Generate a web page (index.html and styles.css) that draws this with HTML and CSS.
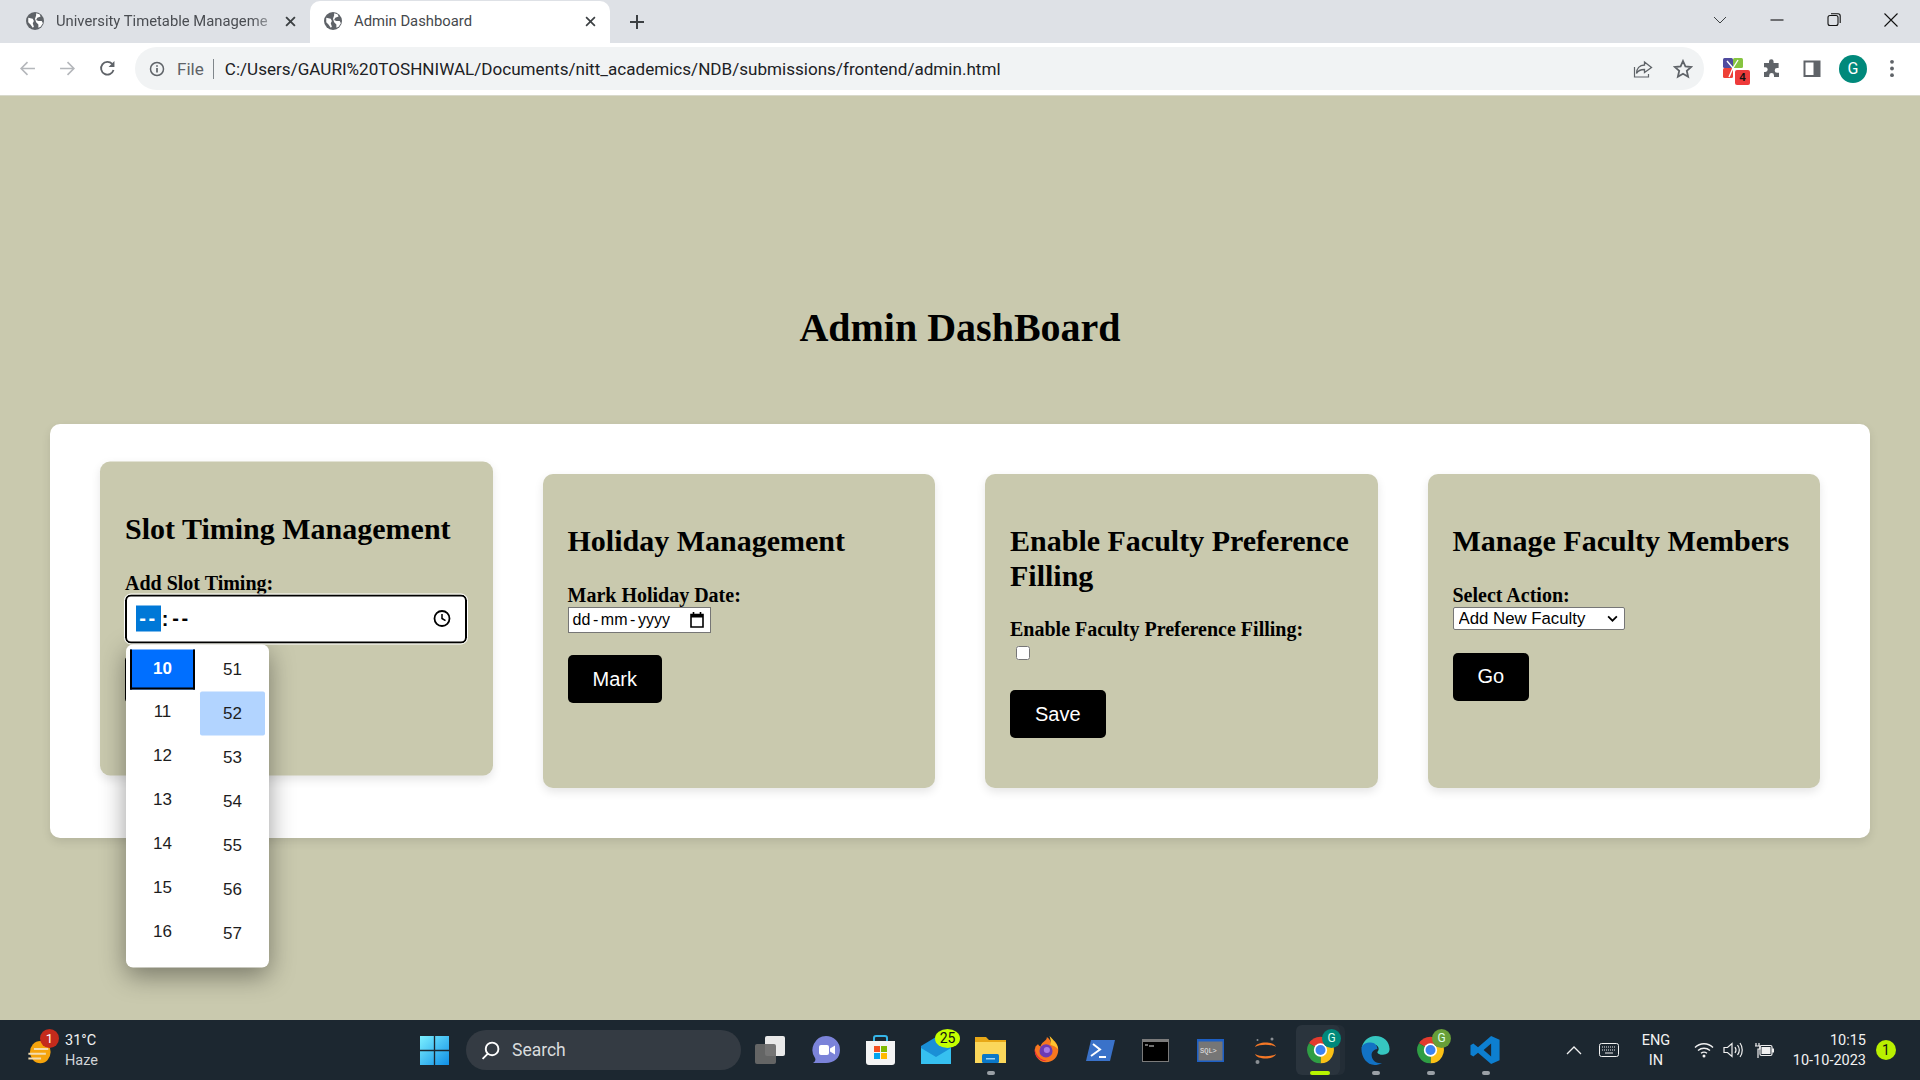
FILE: index.html
```html
<!DOCTYPE html>
<html lang="en">
<head>
<meta charset="utf-8">
<title>Admin Dashboard</title>
<link rel="stylesheet" href="styles.css">
</head>
<body>
<header class="chrome">
  <div class="tabstrip">
    <div class="tab tab-back">
      <svg class="globe" viewBox="0 0 16 16"><circle cx="8" cy="8" r="8" fill="#5f6368"/><path d="M2 5l4 1 1 2-1 2 1 3-1 1-2-3-2-2zM9 1l3 1 1 2-3 1-1 2 2 1 3 0 1 2-2 3-2 1 0-3-2-2-1-3 1-3z" fill="#fff"/></svg>
      <span class="tab-title fade">University Timetable Manageme</span>
      <svg class="tab-x" viewBox="0 0 10 10"><path d="M1 1l8 8M9 1l-8 8" stroke="#3c4043" stroke-width="1.7"/></svg>
    </div>
    <div class="tab tab-active">
      <svg class="globe" viewBox="0 0 16 16"><circle cx="8" cy="8" r="8" fill="#5f6368"/><path d="M2 5l4 1 1 2-1 2 1 3-1 1-2-3-2-2zM9 1l3 1 1 2-3 1-1 2 2 1 3 0 1 2-2 3-2 1 0-3-2-2-1-3 1-3z" fill="#fff"/></svg>
      <span class="tab-title">Admin Dashboard</span>
      <svg class="tab-x" viewBox="0 0 10 10"><path d="M1 1l8 8M9 1l-8 8" stroke="#3c4043" stroke-width="1.5"/></svg>
    </div>
    <svg class="newtab" viewBox="0 0 16 16"><path d="M8 1v14M1 8h14" stroke="#3c4043" stroke-width="2"/></svg>
    <div class="winctl">
      <svg class="w-ico" viewBox="0 0 16 16"><path d="M2 5l6 6 6-6" fill="none" stroke="#3c4043" stroke-width="1"/></svg>
      <svg class="w-ico" viewBox="0 0 16 16"><path d="M1.5 8h13" stroke="#111" stroke-width="1.1"/></svg>
      <svg class="w-ico" viewBox="0 0 16 16"><rect x="2" y="3.5" width="10" height="10" rx="2" fill="none" stroke="#111" stroke-width="1.1"/><path d="M5 1.8h7a2.2 2.2 0 0 1 2.2 2.2v7" fill="none" stroke="#111" stroke-width="1.1"/></svg>
      <svg class="w-ico" viewBox="0 0 16 16"><path d="M1.5 1.5l13 13M14.500 1.500l-13 13" stroke="#111" stroke-width="1.1"/></svg>
    </div>
  </div>
  <div class="toolbar">
    <svg class="nav-ico" viewBox="0 0 16 16"><path d="M15 8H2M8 2L2 8l6 6" fill="none" stroke="#b4b7bb" stroke-width="1.5"/></svg>
    <svg class="nav-ico" viewBox="0 0 16 16"><path d="M1 8h13M8 2l6 6-6 6" fill="none" stroke="#b4b7bb" stroke-width="1.5"/></svg>
    <svg class="nav-ico" viewBox="0 0 16 16"><path d="M13.700 9.500A6 6 0 1 1 12.400 3.700" fill="none" stroke="#5f6368" stroke-width="1.7"/><path d="M14.500 1v5.500H9z" fill="#5f6368"/></svg>
    <div class="omnibox">
      <svg class="info" viewBox="0 0 16 16"><circle cx="8" cy="8" r="6.500" fill="none" stroke="#5f6368" stroke-width="1.500"/><path d="M8 7v4.500M8 4.300v1.500" stroke="#5f6368" stroke-width="1.700"/></svg>
      <span class="scheme">File</span>
      <span class="omni-sep"></span>
      <span class="url">C:/Users/GAURI%20TOSHNIWAL/Documents/nitt_academics/NDB/submissions/frontend/admin.html</span>
      <svg class="omni-ico share" viewBox="0 0 20 20"><path d="M1.500 8v10h14v-3" fill="none" stroke="#5f6368" stroke-width="1.200"/><path d="M11.500 3l7 5.500-7 5v-3c-4 0-6.500 1-8 4 0-5 3-8.500 8-8.500z" fill="none" stroke="#5f6368" stroke-width="1.300"/></svg>
      <svg class="omni-ico" viewBox="0 0 20 20"><path d="M10 2l2.400 5.400 5.800.6-4.400 3.900 1.300 5.800L10 14.700l-5.100 3 1.300-5.800L1.800 8l5.800-.6z" fill="none" stroke="#5f6368" stroke-width="1.800"/></svg>
    </div>
    <div class="ext">
      <svg class="ext-logo" viewBox="0 0 20 20"><rect width="10" height="10" rx="1.500" fill="#4f4a9e"/><rect x="10" width="10" height="10" rx="1.500" fill="#86c440"/><rect y="10" width="10" height="10" rx="1.500" fill="#ee4036"/><path d="M10 10l-4 9M10 10L4 3M10 10l5-8" stroke="#fff" stroke-width="1.400"/></svg>
      <span class="ext-badge">4</span>
    </div>
    <svg class="bar-ico" viewBox="0 0 20 20"><path d="M7 2.500a2.300 2.300 0 0 1 4.600 0V4h5v5h-1.500a2.400 2.400 0 0 0 0 4.800H17V18H12v-1.500a2.400 2.400 0 0 0-4.800 0V18H2v-5h1.300a2.400 2.400 0 0 0 0-4.800H2V4h5z" fill="#5f6368"/></svg>
    <svg class="bar-ico" viewBox="0 0 20 20"><rect x="1.500" y="1.500" width="17" height="16.500" fill="#5f6368"/><rect x="3.500" y="3.500" width="8" height="12.500" fill="#fff"/></svg>
    <span class="avatar">G</span>
    <svg class="menu-ico" viewBox="0 0 6 20"><circle cx="3" cy="3" r="2" fill="#5f6368"/><circle cx="3" cy="10" r="2" fill="#5f6368"/><circle cx="3" cy="17" r="2" fill="#5f6368"/></svg>
  </div>
</header>

<main class="page">
  <h1 class="title">Admin DashBoard</h1>
  <section class="panel">
    <article class="card card-hover">
      <h2>Slot Timing Management</h2>
      <label class="lbl">Add Slot Timing:</label>
      <div class="time-input">
        <span class="seg seg-on">--</span><span class="colon">:</span><span class="seg">--</span>
        <svg class="clock" viewBox="0 0 18 18"><circle cx="9" cy="9" r="7.500" fill="none" stroke="#000" stroke-width="1.800"/><path d="M9 4.500V9l3.500 2.200" fill="none" stroke="#000" stroke-width="1.500"/></svg>
      </div>
      <button class="btn btn-add" type="button" aria-label="Add"></button>
      <div class="picker">
        <ul class="col col-h">
          <li class="now">10</li><li>11</li><li>12</li><li>13</li><li>14</li><li>15</li><li>16</li>
        </ul>
        <ul class="col col-m">
          <li>51</li><li class="hov">52</li><li>53</li><li>54</li><li>55</li><li>56</li><li>57</li>
        </ul>
      </div>
    </article>
    <article class="card">
      <h2>Holiday Management</h2>
      <label class="lbl">Mark Holiday Date:</label>
      <div class="date-input">
        <span class="date-text">dd</span><span class="date-dash">-</span><span class="date-text">mm</span><span class="date-dash">-</span><span class="date-text">yyyy</span>
        <svg class="cal" viewBox="0 0 14 16"><path d="M1 2.500h12v12.500H1z" fill="none" stroke="#000" stroke-width="1.600"/><path d="M1 2.500h12v3H1z" fill="#000"/><path d="M3.500 0v3M10.500 0v3" stroke="#000" stroke-width="1.600"/></svg>
      </div>
      <button class="btn btn-mark" type="button">Mark</button>
    </article>
    <article class="card">
      <h2>Enable Faculty Preference Filling</h2>
      <label class="lbl">Enable Faculty Preference Filling:</label>
      <input class="check" type="checkbox">
      <button class="btn btn-save" type="button">Save</button>
    </article>
    <article class="card">
      <h2>Manage Faculty Members</h2>
      <label class="lbl">Select Action:</label>
      <select class="sel"><option>Add New Faculty</option></select>
      <button class="btn btn-go" type="button">Go</button>
    </article>
  </section>
</main>

<footer class="taskbar">
  <div class="weather">
    <div class="wx-ico">
      <svg viewBox="0 0 30 34"><ellipse cx="16" cy="19" rx="13" ry="14" fill="#f6a40c"/><path d="M1 21h22M1 27h16M8 15h18" stroke="#f3dcae" stroke-width="2.500"/></svg>
      <span class="wx-badge">1</span>
    </div>
    <div class="wx-text"><span>31°C</span><span class="haze">Haze</span></div>
  </div>
  <div class="center">
    <svg class="winlogo" viewBox="0 0 30 30"><defs><linearGradient id="wl" x1="0" y1="0" x2="1" y2="1"><stop offset="0" stop-color="#7cf0ff"/><stop offset="1" stop-color="#0f8fe6"/></linearGradient></defs><path d="M0 0h14.300v14.300H0zM15.700 0H30v14.300H15.700zM0 15.700h14.300V30H0zM15.700 15.700H30V30H15.700z" fill="url(#wl)"/></svg>
    <div class="search">
      <svg class="search-ico" viewBox="0 0 18 18"><circle cx="10.500" cy="7.500" r="6" fill="none" stroke="#fff" stroke-width="1.800"/><path d="M6.500 12L1.500 17" stroke="#fff" stroke-width="1.800"/></svg>
      <span>Search</span>
    </div>
    <div class="apps">
      <div class="app"><svg class="i-tv" viewBox="0 0 31 28"><rect x="10" y="0" width="20" height="20" rx="2" fill="#e9e9e9"/><rect x="0" y="8" width="21" height="20" rx="2" fill="#6a6a6a" opacity=".92"/></svg></div>
      <div class="app"><svg class="i-mt" viewBox="0 0 28 28"><path d="M14 0a14 14 0 0 1 14 14c0 8-6 13-14 13H1c2-1 3-3 2-5A14 14 0 0 1 14 0z" fill="#7b83d9"/><rect x="7" y="9" width="10" height="10" rx="2" fill="#fff"/><path d="M18 12.500l5-3v9l-5-3z" fill="#fff"/></svg></div>
      <div class="app"><svg class="i-st" viewBox="0 0 29 30"><path d="M8 7V3a2 2 0 0 1 2-2h9a2 2 0 0 1 2 2v4" fill="none" stroke="#35b5e8" stroke-width="2"/><path d="M0 6h29v21a3 3 0 0 1-3 3H3a3 3 0 0 1-3-3z" fill="#f4f4f4"/><rect x="8" y="11" width="6" height="6" fill="#f25022"/><rect x="15" y="11" width="6" height="6" fill="#7fba00"/><rect x="8" y="18" width="6" height="6" fill="#00a4ef"/><rect x="15" y="18" width="6" height="6" fill="#ffb900"/></svg></div>
      <div class="app"><svg class="i-ml" viewBox="0 0 30 27"><path d="M0 9L15 0l15 9v18H0z" fill="#1a8fd6"/><path d="M0 27V11l15 9 15-9v16z" fill="#36c0f0"/></svg><span class="mail-badge">25</span></div>
      <div class="app"><svg class="i-ex" viewBox="0 0 31 26"><path d="M0 0h11l3 3h17v23H0z" fill="#e8a817"/><rect x="0" y="5" width="31" height="21" fill="#fbd75b"/><rect x="7" y="17" width="17" height="9" rx="1.500" fill="#0b78c8"/><rect x="11" y="21" width="9" height="1.500" fill="#9fd5f5"/></svg><span class="dot"></span></div>
      <div class="app"><svg class="i-mt" viewBox="0 0 32 32"><path d="M4 12c-3 9 3 18 12 18 8 0 14-6 14-14 0-6-3-9-5-11 0 4-1 5-3 5 0-4-2-7-5-9 0 4-4 5-6 8-1 1-1 2-1 3-2-1-3-2-3-3z" fill="#f7761f"/><path d="M20 0c4 4 9 9 10 15-3-3-6-4-9-5 1-3 0-7-1-10z" fill="#ffc42e"/><path d="M3 14c1 8 7 14 14 14-5 2-15-3-14-14z" fill="#e8253f"/><circle cx="16" cy="17" r="7.500" fill="#6c3bb5"/><circle cx="17" cy="16" r="3.500" fill="#a77ae6"/></svg></div>
      <div class="app"><svg class="i-ps" viewBox="0 0 29 21"><path d="M5 0h24l-5 21H0z" fill="#3a72c9"/><path d="M7 4l7 5.500-9 6.500" fill="none" stroke="#fff" stroke-width="2"/><path d="M13 17h7" stroke="#fff" stroke-width="2"/></svg></div>
      <div class="app"><svg class="i-tm" viewBox="0 0 27 23"><rect width="27" height="23" fill="#7b7b7b"/><rect x="1" y="3" width="25" height="19" fill="#000"/><path d="M3 6h3M7 7h5" stroke="#ddd" stroke-width="1.200"/></svg></div>
      <div class="app"><svg class="i-tm" viewBox="0 0 27 23"><rect width="27" height="23" fill="#1d5fc4"/><rect x="1.500" y="2.500" width="24" height="19" fill="#767676"/><text class="sql-txt" x="3" y="14">SQL&gt;</text></svg></div>
      <div class="app"><svg class="i-ju" viewBox="0 0 21 27"><path d="M0 10c2-6 19-6 21 0-5-3-16-3-21 0zM0 17c2 6 19 6 21 0-5 3-16 3-21 0z" fill="#f37726"/><circle cx="17" cy="2" r="1.500" fill="#8a8f94"/><circle cx="2.500" cy="25" r="2" fill="#8a8f94"/><circle cx="2.500" cy="3" r="1" fill="#8a8f94"/></svg></div>
      <div class="app app-active">
        <svg viewBox="0 0 36 36"><path d="M18 18L4.140 10A16 16 0 0 1 31.860 10z" fill="#e33b2e"/><path d="M18 18L31.860 10A16 16 0 0 1 18 34z" fill="#fbc116"/><path d="M18 18L18 34A16 16 0 0 1 4.140 10z" fill="#2f9e44"/><circle cx="18" cy="18" r="8" fill="#fff"/><circle cx="18" cy="18" r="6" fill="#3b82f0"/></svg>
        <span class="g-badge">G</span><span class="bar-on"></span>
      </div>
      <div class="app"><svg viewBox="0 0 32 32"><path d="M1 15C2 7 8 1 16 1c9 0 15 6 15 14 0 4-3 6-7 6-3 0-6-1-6-3 3-3 1-8-4-8C7 10 1 11 1 15z" fill="#36c6c0"/><path d="M1 15c0-5 5-7 10-7 4 0 7 3 7 7-3 0-7 3-6 8 1 5 6 8 11 7-3 1-5 2-8 2C7 32 1 24 1 15z" fill="#1272c4"/></svg><span class="dot"></span></div>
      <div class="app">
        <svg viewBox="0 0 36 36"><path d="M18 18L4.140 10A16 16 0 0 1 31.860 10z" fill="#e33b2e"/><path d="M18 18L31.860 10A16 16 0 0 1 18 34z" fill="#fbc116"/><path d="M18 18L18 34A16 16 0 0 1 4.140 10z" fill="#2f9e44"/><circle cx="18" cy="18" r="8" fill="#fff"/><circle cx="18" cy="18" r="6" fill="#3b82f0"/></svg>
        <span class="g-badge g-green">G</span><span class="dot"></span>
      </div>
      <div class="app"><svg viewBox="0 0 32 32"><path d="M22 1l9 4v22l-9 4L8 19l-5 4-3-2V11l3-2 5 4zM22 9l-8 7 8 7z" fill="#0d7fd0"/></svg><span class="dot"></span></div>
    </div>
  </div>
  <div class="tray">
    <svg class="tray-chev" viewBox="0 0 16 10"><path d="M1 9l7-7 7 7" fill="none" stroke="#f0f0f0" stroke-width="1.300"/></svg>
    <svg class="tray-kb" viewBox="0 0 20 14"><rect x=".5" y=".5" width="19" height="13" rx="2" fill="none" stroke="#f0f0f0"/><path d="M3 4h14M3 7h14" stroke="#f0f0f0" stroke-dasharray="1 1"/><path d="M6 10h8" stroke="#f0f0f0"/></svg>
    <div class="lang"><span>ENG</span><span>IN</span></div>
    <svg class="tray-ico" viewBox="0 0 20 16"><path d="M1 5.500c5-5 13-5 18 0M4 8.500c3.500-3 8.500-3 12 0M7 11.200c1.800-1.300 4.200-1.300 6 0" fill="none" stroke="#f0f0f0" stroke-width="1.400"/><circle cx="10" cy="14" r="1.500" fill="#f0f0f0"/></svg>
    <svg class="tray-ico tray-vol" viewBox="0 0 20 16"><path d="M1 5.500h3.500L9 1.500v13l-4.500-4H1z" fill="none" stroke="#f0f0f0" stroke-width="1.200"/><path d="M12 5c1.200 1.800 1.200 4.200 0 6M14.500 3c2.200 3 2.200 7 0 10M17 1c3 4 3 10 0 14" fill="none" stroke="#f0f0f0" stroke-width="1.200"/></svg>
    <svg class="tray-ico tray-bat" viewBox="0 0 20 16"><path d="M2 1v3M5 1v3M1 4h5v3H4v9" fill="none" stroke="#f0f0f0" stroke-width="1.200"/><rect x="6" y="3.500" width="12" height="10" rx="1.500" fill="none" stroke="#f0f0f0" stroke-width="1.200"/><rect x="7.500" y="5" width="9" height="7" fill="#f0f0f0"/><rect x="18" y="6.500" width="2" height="4" fill="#f0f0f0"/></svg>
    <div class="clock-text"><span>10:15</span><span>10-10-2023</span></div>
    <span class="notif">1</span>
  </div>
</footer>
</body>
</html>
```
FILE: styles.css
```css
* { box-sizing: border-box; }
html, body { margin: 0; padding: 0; height: 100%; }
body {
  display: flex;
  flex-direction: column;
  height: 1080px;
  overflow: hidden;
  background: #c9c9ae;
  font-family: "Liberation Serif", serif;
  color: #000;
}

/* Browser chrome */
.chrome { flex: none; height: 96px; background: #fff; border-bottom: 1px solid #d8d9cc; }
.tabstrip { height: 43px; background: #dee1e6; display: flex; align-items: stretch; padding-top: 1px; }
.tab { display: flex; align-items: center; font-family: Roboto, sans-serif; font-size: 14.800px; color: #45484c; }
.tab-back { width: 310px; padding: 0 14px 2px 26px; }
.tab-active { width: 300px; padding: 0 14px 2px 14px; background: #fff; border-radius: 10px 10px 0 0; }
.globe { width: 18px; height: 18px; flex: none; }
.tab-title { flex: 1; margin-left: 12px; white-space: nowrap; overflow: hidden; }
.tab-active .tab-title { margin-left: 12px; }
.fade { color: #4a4d52; -webkit-mask-image: linear-gradient(to right, #000 85%, transparent 100%); mask-image: linear-gradient(to right, #000 85%, transparent 100%); }
.tab-x { width: 11px; height: 11px; flex: none; }
.newtab { width: 16px; height: 16px; margin: 13px 0 0 19px; }
.winctl { margin-left: auto; display: flex; align-items: center; padding: 0 21px 5px 0; gap: 41px; }
.w-ico { width: 16px; height: 16px; }
.toolbar { height: 52px; display: flex; align-items: center; padding: 0 0 1px 19px; }
.nav-ico { width: 17px; height: 17px; margin-right: 23px; }
.nav-ico:nth-child(3) { margin-right: 19px; }
.omnibox { width: 1569px; height: 43px; border-radius: 22px; background: #f1f3f4; display: flex; align-items: center; padding: 0 11px 0 14px; font-family: Roboto, sans-serif; font-size: 17.080px; color: #202124; }
.info { width: 16px; height: 16px; flex: none; }
.scheme { margin-left: 12px; color: #5f6368; }
.omni-sep { width: 1px; height: 20px; background: #80868b; margin: 0 11px 0 9px; }
.url { flex: 1; white-space: nowrap; }
.omni-ico { width: 20px; height: 20px; flex: none; margin-left: 20px; }
.ext { position: relative; width: 22px; height: 22px; margin-left: 19px; }
.ext-logo { width: 20px; height: 20px; display: block; }
.ext-badge { position: absolute; left: 12px; top: 12px; width: 15px; height: 15px; background: #ee3a3a; border-radius: 2px; font: bold 11px/15px "Liberation Sans", sans-serif; text-align: center; color: #111; }
.bar-ico { width: 20px; height: 20px; margin-left: 17px; }
.bar-ico + .bar-ico { margin-left: 20px; }
.avatar { width: 28px; height: 28px; margin-left: 17px; border-radius: 50%; background: #00897b; color: #fff; font: 16px/28px Roboto, sans-serif; text-align: center; }
.menu-ico { width: 6px; height: 19px; margin-left: 22px; }

/* Page */
.page { flex: 1; min-height: 0; padding: 0 50px; display: flex; flex-direction: column; }
.title { margin: 209px 0 0; height: 46px; font-size: 40px; line-height: 46px; text-align: center; font-weight: bold; }
.panel { margin-top: 73px; height: 414px; padding: 50px; background: #fff; border-radius: 10px; box-shadow: 0 4px 10px rgba(0,0,0,.1); display: flex; gap: 50px; }
.card { position: relative; flex: 1 1 0; min-width: 0; padding: 25px; background: #c9c9ae; border-radius: 10px; box-shadow: 0 4px 10px rgba(0,0,0,.1); }
.card-hover { transform: translateY(-12.500px); }
h2 { margin: 25px 0; font-size: 30px; line-height: 34.500px; font-weight: bold; }
.lbl { display: block; font-size: 20px; line-height: 23px; font-weight: bold; }

.time-input { position: relative; z-index: 3; display: flex; align-items: center; width: 342px; height: 49px; padding: 0 11px 0 9px; background: #fff; border: 2px solid #000; border-radius: 6px; outline: 1px solid #fff; font: 20px "Liberation Sans", sans-serif; }
.seg { width: 25px; height: 26px; line-height: 25px; text-align: center; letter-spacing: 2.500px; font-weight: bold; }
.seg-on { background: #0078d7; color: #fff; }
.colon { width: 8px; text-align: center; font-weight: bold; }
.clock { width: 18px; height: 18px; margin-left: auto; margin-right: 3px; }

.picker { position: absolute; left: 26px; top: 183px; width: 143px; height: 323px; padding: 5px 4px; background: #fff; border-radius: 7px; box-shadow: 0 8px 26px rgba(0,0,0,.4); display: flex; gap: 5px; font: 17px "Liberation Sans", sans-serif; color: #1d1d1d; z-index: 2; }
.col { list-style: none; margin: 0; padding: 0; width: 65px; }
.col-m { margin-top: -2.500px; }
.col li { height: 44px; line-height: 44px; text-align: center; }
.col li.now { background: #006fff; color: #fff; font-weight: bold; border: 2px solid #000; border-top: 0; line-height: 37px; height: 40px; }
.hov { background: #b2d4ff; border-radius: 2px; }

.date-input { display: flex; align-items: center; width: 143px; height: 26px; padding: 0 3px 0 4px; background: #fff; border: 1px solid #767676; font: 16px "Liberation Sans", sans-serif; }
.date-dash { margin: 0 2.600px; }
.cal { width: 14px; height: 16px; margin-left: auto; margin-right: 3px; }
.btn { display: block; margin-top: 23px; height: 48px; padding: 0 25px; border: 0; border-radius: 5px; background: #000; color: #fff; font: 20px "Liberation Sans", sans-serif; }
.btn-add { width: 86px; margin-top: 12px; }
.btn-mark { margin-top: 22.500px; }
.check { display: block; width: 14px; height: 14px; margin: 5px 4px 3px 6px; }
.btn-save { margin-top: 30px; }
.sel {
  display: block; width: 172px; height: 23px; padding: 0 0 0 5px;
  font: 16.800px "Liberation Sans", sans-serif; color: #000;
  border: 1px solid #767676; border-radius: 2px;
  appearance: none; -webkit-appearance: none;
  background: #fff url("data:image/svg+xml,%3Csvg xmlns='http://www.w3.org/2000/svg' viewBox='0 0 12 8'%3E%3Cpath d='M1 1.500l5 5 5-5' fill='none' stroke='%23000' stroke-width='2'/%3E%3C/svg%3E") no-repeat right 6px center / 11px 7px;
}
.btn-go { margin-top: 23px; }

/* Taskbar */
.taskbar { flex: none; height: 60px; background: #1c2730; display: flex; align-items: center; color: #f2f2f2; font-family: Roboto, sans-serif; position: relative; }
.weather { display: flex; align-items: center; width: 420px; padding-left: 26px; }
.wx-ico { position: relative; width: 27px; height: 33px; margin-top: 6px; }
.wx-ico svg { width: 27px; height: 27px; }
.wx-badge { position: absolute; left: 14px; top: -8px; width: 19px; height: 19px; border-radius: 50%; background: #c42b1c; color: #fff; font-size: 13px; line-height: 19px; text-align: center; }
.wx-text { display: flex; flex-direction: column; margin: 2px 0 0 12px; font-size: 14.500px; line-height: 20px; }
.haze { color: #d0d3d6; }
.center { display: flex; align-items: center; }
.winlogo { width: 29px; height: 29px; }
.search { display: flex; align-items: center; width: 275px; height: 40px; margin-left: 17px; padding-left: 15px; border-radius: 20px; background: #343b43; font-size: 17.500px; color: #d9dbdd; }
.search-ico { width: 19px; height: 19px; margin-right: 12px; }
.apps { display: flex; margin-left: 2px; }
.app { position: relative; width: 55px; height: 50px; display: flex; align-items: center; justify-content: center; }
.app svg { position: relative; width: 31px; height: 30px; }
.app svg.i-tv { width: 31px; height: 28px; }
.app svg.i-mt { width: 28px; height: 28px; }
.app svg.i-st { width: 29px; height: 30px; }
.app svg.i-ml { width: 30px; height: 27px; }
.app svg.i-ex { width: 31px; height: 26px; }
.app svg.i-ps { width: 29px; height: 21px; }
.app svg.i-tm { width: 27px; height: 23px; }
.app svg.i-ju { width: 21px; height: 27px; }
.sql-txt { font: 7px "Liberation Mono", monospace; fill: #e8e8e8; }
.app-active::before { content: ""; position: absolute; left: 3px; top: 0; width: 44px; height: 50px; border-radius: 6px; background: #2a343d; box-shadow: 5px 0 0 #232d36; }
.dot { position: absolute; left: 24px; bottom: 0; width: 8px; height: 4px; border-radius: 2px; background: #9aa0a6; }
.bar-on { position: absolute; left: 17px; bottom: 0; width: 20px; height: 4px; border-radius: 2px; background: #b6f400; }
.mail-badge { position: absolute; left: 27px; top: 4px; width: 25px; height: 19px; border-radius: 50%; background: #c5ff00; color: #111; font-size: 14px; line-height: 19px; text-align: center; }
.g-badge { position: absolute; left: 29px; top: 4px; width: 19px; height: 19px; border-radius: 50%; background: #00897b; color: #dfe; font-size: 12px; line-height: 19px; text-align: center; }
.g-green { background: #689f38; }
.tray { position: absolute; right: 0; top: 0; height: 60px; display: flex; align-items: center; font-size: 14.500px; }
.tray-chev { width: 16px; height: 10px; }
.tray-kb { width: 20px; height: 14px; margin-left: 17px; }
.lang { display: flex; flex-direction: column; align-items: center; line-height: 20px; width: 40px; margin: 2px 0 0 17px; }
.tray-ico { width: 20px; height: 16px; margin-left: 10px; }
.lang + .tray-ico { margin-left: 18px; }
.tray-ico.tray-vol { margin-left: 9px; }
.tray-ico.tray-bat { margin-left: 11px; }
.clock-text { display: flex; flex-direction: column; align-items: flex-end; width: 92px; margin-top: 2px; line-height: 20px; font-size: 14.500px; }
.notif { width: 20px; height: 20px; margin: 0 24px 0 10px; border-radius: 50%; background: #b9f000; color: #111; font-size: 14px; line-height: 20px; text-align: center; }
```
